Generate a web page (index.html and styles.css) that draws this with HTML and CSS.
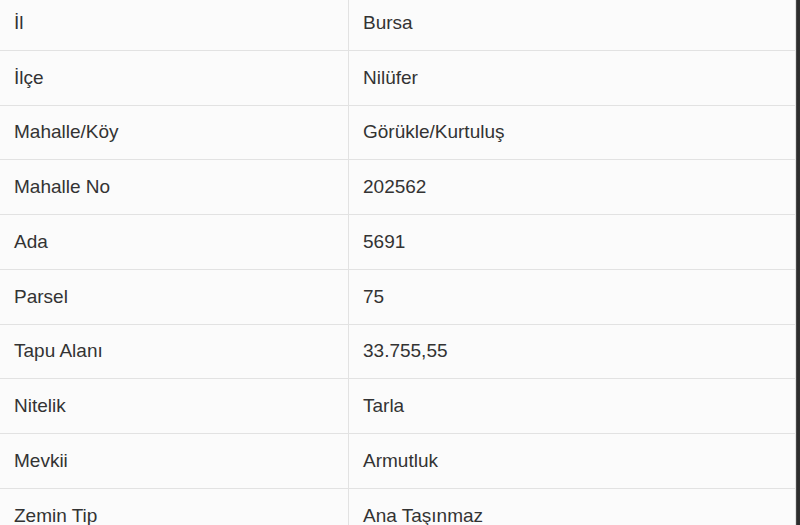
FILE: index.html
```html
<!DOCTYPE html>
<html lang="tr">
<head>
<meta charset="utf-8">
<link rel="stylesheet" href="styles.css">
</head>
<body>
<div class="page">
  <div class="info">
    <div class="row"><div class="cell key">İl</div><div class="cell val">Bursa</div></div>
    <div class="row"><div class="cell key">İlçe</div><div class="cell val">Nilüfer</div></div>
    <div class="row"><div class="cell key">Mahalle/Köy</div><div class="cell val">Görükle/Kurtuluş</div></div>
    <div class="row"><div class="cell key">Mahalle No</div><div class="cell val">202562</div></div>
    <div class="row"><div class="cell key">Ada</div><div class="cell val">5691</div></div>
    <div class="row"><div class="cell key">Parsel</div><div class="cell val">75</div></div>
    <div class="row"><div class="cell key">Tapu Alanı</div><div class="cell val">33.755,55</div></div>
    <div class="row"><div class="cell key">Nitelik</div><div class="cell val">Tarla</div></div>
    <div class="row"><div class="cell key">Mevkii</div><div class="cell val">Armutluk</div></div>
    <div class="row"><div class="cell key">Zemin Tip</div><div class="cell val">Ana Taşınmaz</div></div>
  </div>
  <div class="edge"></div>
</div>
</body>
</html>
```
FILE: styles.css
```css
html, body {
  margin: 0;
  padding: 0;
  height: 100%;
  overflow: hidden;
  background: #fbfbfb;
}
.page {
  display: flex;
  height: 525px;
}
.info {
  width: 795px;
  border-right: 1px solid #e2e2e2;
  margin-top: -4px;
  font-family: "Liberation Sans", Arial, sans-serif;
  font-size: 19px;
  color: #333;
}
.row {
  display: grid;
  grid-template-columns: 348px 1fr;
  height: 53.75px;
  border-bottom: 1px solid #e2e2e2;
}
.cell {
  display: flex;
  align-items: center;
  padding-left: 14px;
}
.val {
  border-left: 1px solid #e2e2e2;
}
.edge {
  flex: 1;
  background: linear-gradient(to right, #555 0, #2b2b2b 40%, #303030 100%);
}
```
